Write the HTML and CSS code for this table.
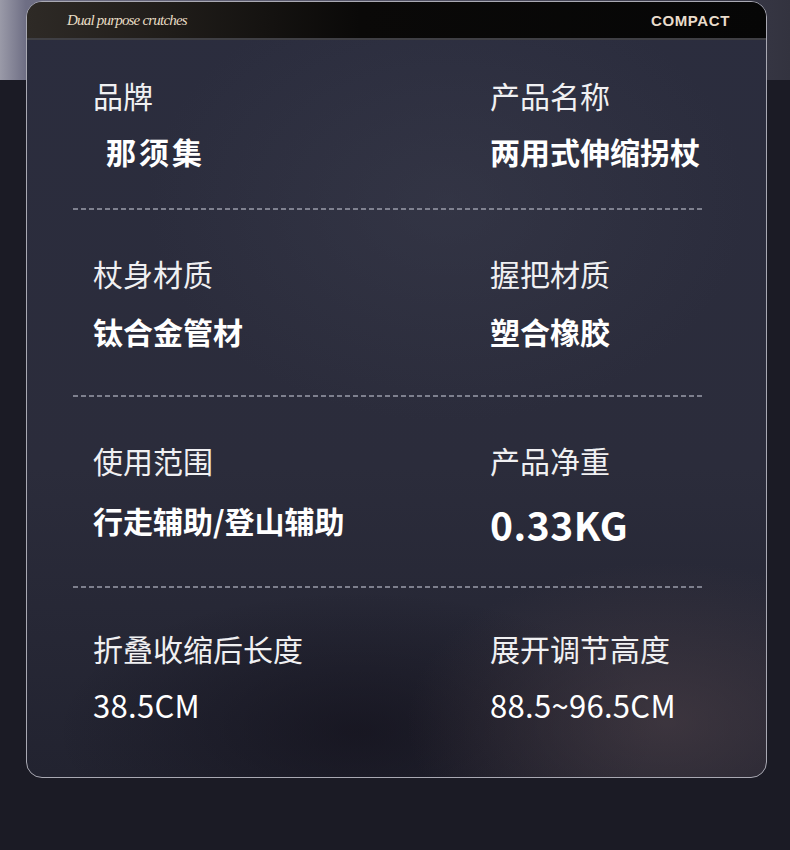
FILE: index.html
```html
<!DOCTYPE html>
<html lang="zh">
<head>
<meta charset="utf-8">
<title>两用式伸缩拐杖</title>
<link rel="stylesheet" href="styles.css">
</head>
<body>
<div class="page">
  <div class="card">
    <div class="card-head">
      <span class="script">Dual purpose crutches</span>
      <span class="tag">COMPACT</span>
    </div>
    <div class="card-body">
      <div class="sec sec-first">
        <div class="cell">
          <div class="label">品牌</div>
          <div class="value brand">那须集</div>
        </div>
        <div class="cell">
          <div class="label">产品名称</div>
          <div class="value">两用式伸缩拐杖</div>
        </div>
      </div>
      <div class="dash"></div>
      <div class="sec">
        <div class="cell">
          <div class="label">杖身材质</div>
          <div class="value">钛合金管材</div>
        </div>
        <div class="cell">
          <div class="label">握把材质</div>
          <div class="value">塑合橡胶</div>
        </div>
      </div>
      <div class="dash"></div>
      <div class="sec sec-big">
        <div class="cell">
          <div class="label">使用范围</div>
          <div class="value">行走辅助/登山辅助</div>
        </div>
        <div class="cell">
          <div class="label">产品净重</div>
          <div class="value big">0.33KG</div>
        </div>
      </div>
      <div class="dash"></div>
      <div class="sec sec-last">
        <div class="cell">
          <div class="label">折叠收缩后长度</div>
          <div class="value num">38.5CM</div>
        </div>
        <div class="cell">
          <div class="label">展开调节高度</div>
          <div class="value num">88.5~96.5CM</div>
        </div>
      </div>
    </div>
  </div>
</div>
</body>
</html>
```

FILE: styles.css
```css
html, body {
  margin: 0;
  padding: 0;
}
body {
  width: 790px;
  height: 850px;
  overflow: hidden;
  background:
    linear-gradient(90deg, #9a9aa8 0px, #6e6e84 26px, #3c3c4c 700px, #33333f 790px) top left / 790px 80px no-repeat,
    #1b1b25;
  font-family: "Noto Sans CJK SC", "Noto Sans", sans-serif;
  color: #f2f2f4;
}
.page {
  padding: 1px 0 0 26px;
}
.card {
  width: 739px;
  border: 1px solid #a9a9b3;
  border-radius: 16px;
  overflow: hidden;
  background:
    radial-gradient(ellipse 260px 160px at 640px 720px, rgba(80, 66, 72, 0.55), rgba(80, 66, 72, 0) 100%),
    radial-gradient(ellipse 300px 140px at 330px 730px, rgba(16, 14, 24, 0.6), rgba(16, 14, 24, 0) 100%),
    radial-gradient(ellipse 300px 220px at 420px 200px, rgba(60, 62, 78, 0.45), rgba(60, 62, 78, 0) 100%),
    linear-gradient(180deg, #2b2d3e 0%, #2b2c3b 60%, #222330 100%);
}
.card-head {
  height: 36px;
  display: flex;
  align-items: center;
  justify-content: space-between;
  padding: 0 36px 0 40px;
  background: linear-gradient(90deg, #2e2a26 0%, #1f1c19 20%, #0a0908 45%, #060606 100%);
  border-bottom: 2px solid #3f3f44;
}
.script {
  font-family: "Liberation Serif", "DejaVu Serif", serif;
  font-style: italic;
  font-size: 15px;
  color: #e8ddc5;
  letter-spacing: -0.8px;
}
.tag {
  font-family: "Liberation Sans", Arial, sans-serif;
  font-weight: 700;
  font-size: 15px;
  letter-spacing: 0.6px;
  color: #e9dccb;
}
.card-body {
  padding: 0 64px 0 46px;
}
.sec {
  display: grid;
  grid-template-columns: 397px 1fr;
  padding: 43px 0 44px 20px;
}
.sec-first {
  padding-top: 35px;
  padding-bottom: 37px;
}
.sec-first .cell {
  gap: 16px;
}
.sec-last {
  padding-top: 40px;
  padding-bottom: 52px;
}
.sec-last .cell {
  gap: 17px;
}
.cell {
  display: flex;
  flex-direction: column;
  gap: 18px;
}
.label {
  font-size: 30px;
  line-height: 40px;
  font-weight: 400;
  color: #f0f0f2;
  white-space: nowrap;
}
.value {
  font-size: 30px;
  line-height: 40px;
  font-weight: 700;
  color: #ffffff;
  white-space: nowrap;
}
.brand {
  padding-left: 13px;
  letter-spacing: 3px;
}
.sec-big .value {
  line-height: 44px;
}
.big {
  font-size: 39px;
  letter-spacing: 0.5px;
  margin-top: 4px;
  margin-bottom: -4px;
}
.num {
  font-weight: 400;
  font-size: 31px;
  letter-spacing: 0.3px;
}
.dash {
  height: 2px;
  background: repeating-linear-gradient(90deg, #8d8f9d 0 5px, transparent 5px 8px);
  opacity: 0.85;
}
```
